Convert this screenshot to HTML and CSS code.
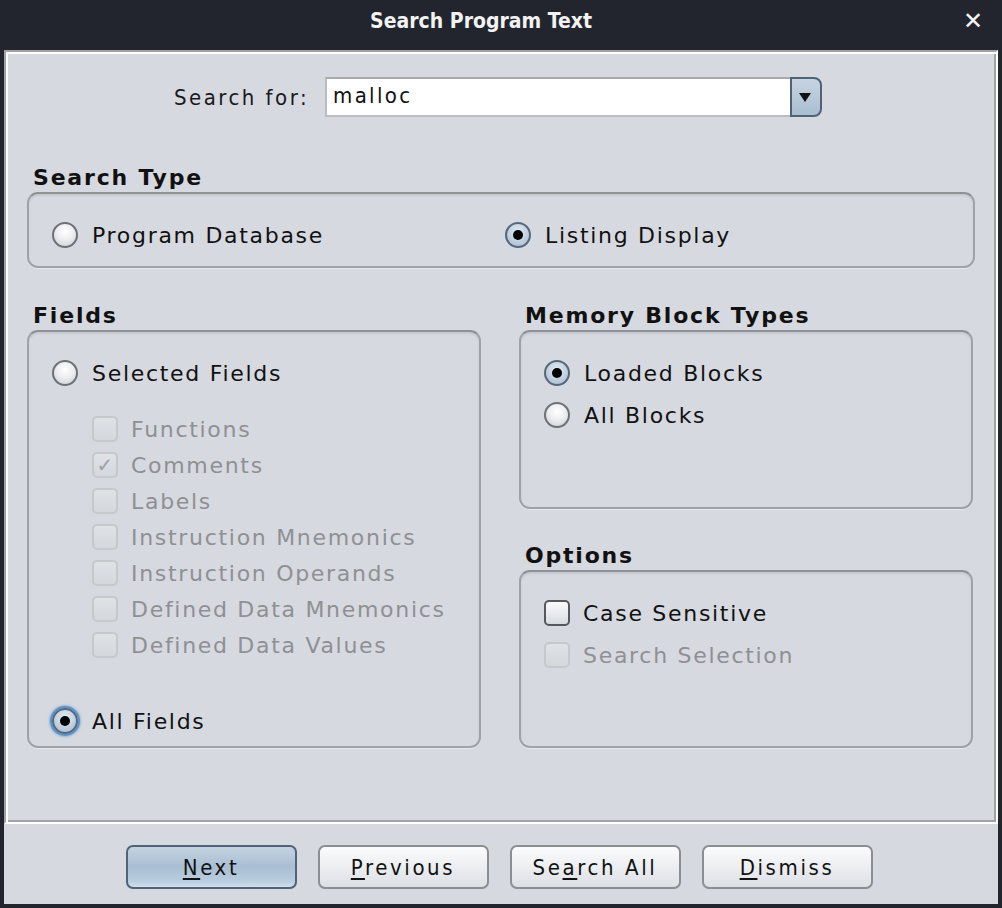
FILE: index.html
```html
<!DOCTYPE html>
<html lang="en">
<head>
<meta charset="utf-8">
<title>Search Program Text</title>
<link rel="stylesheet" href="styles.css">
</head>
<body>
<div class="window">
  <div class="titlebar">
    <span class="title">Search Program Text</span>
    <span class="close">✕</span>
  </div>
  <div class="client">
    <div class="panel">
      <div class="search-row">
        <label class="search-label">Search for:</label>
        <div class="combo">
          <div class="combo-field">malloc</div>
          <div class="combo-btn"><span class="arrow"></span></div>
        </div>
      </div>

      <div class="section">
        <div class="heading">Search Type</div>
        <div class="group type-group">
          <div class="opt"><span class="radio"></span><span class="lbl">Program Database</span></div>
          <div class="opt"><span class="radio on"></span><span class="lbl">Listing Display</span></div>
        </div>
      </div>

      <div class="columns">
        <div class="col">
          <div class="heading">Fields</div>
          <div class="group fields-group">
            <div class="opt row36"><span class="radio"></span><span class="lbl">Selected Fields</span></div>
            <div class="checks">
              <div class="opt row36 dis"><span class="check"></span><span class="lbl">Functions</span></div>
              <div class="opt row36 dis"><span class="check checked">✓</span><span class="lbl">Comments</span></div>
              <div class="opt row36 dis"><span class="check"></span><span class="lbl">Labels</span></div>
              <div class="opt row36 dis"><span class="check"></span><span class="lbl">Instruction Mnemonics</span></div>
              <div class="opt row36 dis"><span class="check"></span><span class="lbl">Instruction Operands</span></div>
              <div class="opt row36 dis"><span class="check"></span><span class="lbl">Defined Data Mnemonics</span></div>
              <div class="opt row36 dis"><span class="check"></span><span class="lbl">Defined Data Values</span></div>
            </div>
            <div class="opt row36"><span class="radio on focus"></span><span class="lbl">All Fields</span></div>
          </div>
        </div>
        <div class="col">
          <div class="heading">Memory Block Types</div>
          <div class="group mem-group">
            <div class="opt row42"><span class="radio on"></span><span class="lbl">Loaded Blocks</span></div>
            <div class="opt row42"><span class="radio"></span><span class="lbl">All Blocks</span></div>
          </div>
          <div class="heading opts-heading">Options</div>
          <div class="group opts-group">
            <div class="opt row42"><span class="check enabled"></span><span class="lbl">Case Sensitive</span></div>
            <div class="opt row42 dis"><span class="check"></span><span class="lbl">Search Selection</span></div>
          </div>
        </div>
      </div>
    </div>
    <div class="buttons">
      <button class="btn default"><u>N</u>ext</button>
      <button class="btn"><u>P</u>revious</button>
      <button class="btn">Se<u>a</u>rch All</button>
      <button class="btn"><u>D</u>ismiss</button>
    </div>
  </div>
</div>
</body>
</html>
```

FILE: styles.css
```css
* { box-sizing: border-box; }
html, body { margin: 0; padding: 0; }
body {
  width: 1002px;
  height: 908px;
  background: #22252e;
  font-family: "DejaVu Sans", sans-serif;
  overflow: hidden;
}
.window {
  width: 1002px;
  height: 908px;
  display: flex;
  flex-direction: column;
  background: #22252e;
}
.titlebar {
  height: 50px;
  position: relative;
  display: flex;
  justify-content: center;
  align-items: flex-start;
  padding-top: 7px;
  padding-right: 40px;
  color: #f2f2f2;
}
.title {
  font-family: "DejaVu Sans Condensed", "DejaVu Sans", sans-serif;
  font-weight: bold;
  font-size: 21px;
  line-height: 28px;
}
.close {
  position: absolute;
  right: 19px;
  top: 7px;
  font-size: 24px;
  line-height: 28px;
  font-weight: bold;
  color: #f2f2f2;
}
.client {
  flex: 1;
  margin: 0 4px 4px 4px;
  background: #d6d9df;
  display: flex;
  flex-direction: column;
}
.panel {
  height: 774px;
  border: 2px solid;
  border-color: #a0a2a6 #ffffff #ffffff #a0a2a6;
  box-shadow: inset 2px 2px 0 #ffffff, inset -2px -2px 0 #a0a2a6;
  padding: 0 21px 0 21px;
}
.search-row {
  display: flex;
  justify-content: center;
  align-items: center;
  gap: 16px;
  margin-top: 25px;
  height: 40px;
  padding-right: 6px;
}
.search-label {
  font-family: "DejaVu Sans Condensed", "DejaVu Sans", sans-serif;
  font-size: 22px;
  letter-spacing: 2.5px;
  color: #1a1a1a;
}
.combo {
  display: flex;
  height: 40px;
  width: 497px;
}
.combo-field {
  flex: 1;
  background: #ffffff;
  border: 2px solid #b9bcc1;
  border-right: none;
  border-top-color: #a6a9ae;
  font-family: "DejaVu Sans Condensed", "DejaVu Sans", sans-serif;
  font-size: 22px;
  letter-spacing: 2.3px;
  line-height: 34px;
  padding-left: 6px;
  color: #111;
}
.combo-btn {
  width: 32px;
  border: 2px solid #4f6277;
  border-radius: 0 8px 8px 0;
  background: linear-gradient(#c7d4e1, #a9bed2);
  display: flex;
  align-items: center;
  justify-content: center;
}
.arrow {
  width: 0; height: 0;
  border-left: 6px solid transparent;
  border-right: 6px solid transparent;
  border-top: 9px solid #111;
  margin-left: -2px;
}
.section { margin-top: 49px; }
.heading {
  font-weight: bold;
  font-size: 22px;
  line-height: 24px;
  letter-spacing: 1.8px;
  color: #111;
  padding-left: 6px;
  height: 24px;
}
.group {
  margin-top: 2px;
  border: 2px solid #9fa2a7;
  border-top-color: #8e9196;
  border-radius: 11px;
  box-shadow: inset 0 2px 2px rgba(0,0,0,0.08), 0 1px 0 rgba(255,255,255,0.4);
}
.type-group {
  height: 76px;
  display: grid;
  grid-template-columns: 453px auto;
  align-items: center;
  padding-left: 23px;
  padding-top: 10px;
}
.opt {
  display: flex;
  align-items: center;
  font-size: 22px;
  color: #111;
}
.lbl { letter-spacing: 1.7px; }
.radio {
  width: 26px;
  height: 26px;
  border-radius: 50%;
  border: 2px solid #6d7075;
  background: radial-gradient(circle at 50% 35%, #ffffff 0%, #eceef1 45%, #c8ccd2 100%);
  margin-right: 14px;
  flex: none;
  position: relative;
}
.radio.on {
  border-color: #56687b;
  background: radial-gradient(circle at 50% 35%, #e4ecf4 0%, #b7c8da 70%, #9fb3c8 100%);
}
.radio.on::after {
  content: "";
  position: absolute;
  left: 50%; top: 50%;
  width: 10px; height: 10px;
  margin: -5px 0 0 -5px;
  border-radius: 50%;
  background: #000;
}
.radio.focus {
  box-shadow: 0 0 0 2px #5b93c8, 0 0 2px 3px rgba(110,160,210,0.6);
}
.columns {
  display: grid;
  grid-template-columns: 454px 454px;
  column-gap: 38px;
  margin-top: 36px;
}
.fields-group {
  height: 418px;
  padding: 23px 0 0 23px;
}
.row36 { height: 36px; }
.row42 { height: 42px; }
.checks {
  margin-top: 20px;
  padding-left: 40px;
  margin-bottom: 40px;
}
.check {
  width: 26px;
  height: 26px;
  border-radius: 5px;
  border: 2px solid #c6c8cc;
  background: linear-gradient(#dfe2e6, #d4d7dc);
  margin-right: 13px;
  flex: none;
  display: flex;
  align-items: center;
  justify-content: center;
  font-size: 20px;
  color: #a0a2a6;
  line-height: 1;
}
.check.enabled {
  border-color: #55585d;
  background: linear-gradient(#fbfbfc, #d8dce2);
}
.dis { color: #8e9093; }
.mem-group {
  height: 179px;
  padding: 20px 0 0 23px;
}
.opts-heading { margin-top: 35px; }
.opts-group {
  height: 178px;
  padding: 20px 0 0 23px;
}
.buttons {
  flex: 1;
  display: flex;
  justify-content: center;
  align-items: flex-start;
  gap: 21px;
  padding-top: 21px;
  padding-right: 4px;
}
.btn {
  width: 171px;
  height: 44px;
  border: 2px solid #8b8e93;
  border-radius: 7px;
  background: linear-gradient(#fbfbfc 0%, #eceef1 50%, #dcdfe4 100%);
  font-family: "DejaVu Sans Condensed", "DejaVu Sans", sans-serif;
  font-size: 22px;
  letter-spacing: 2.6px;
  color: #111;
  padding: 0;
}
.btn.default {
  border-color: #4f6277;
  background: linear-gradient(#c4d3e1 0%, #a9bed2 50%, #b9cde0 85%, #cfe0ef 100%);
}
.btn u { text-decoration-thickness: 2px; text-underline-offset: 3px; }
```
